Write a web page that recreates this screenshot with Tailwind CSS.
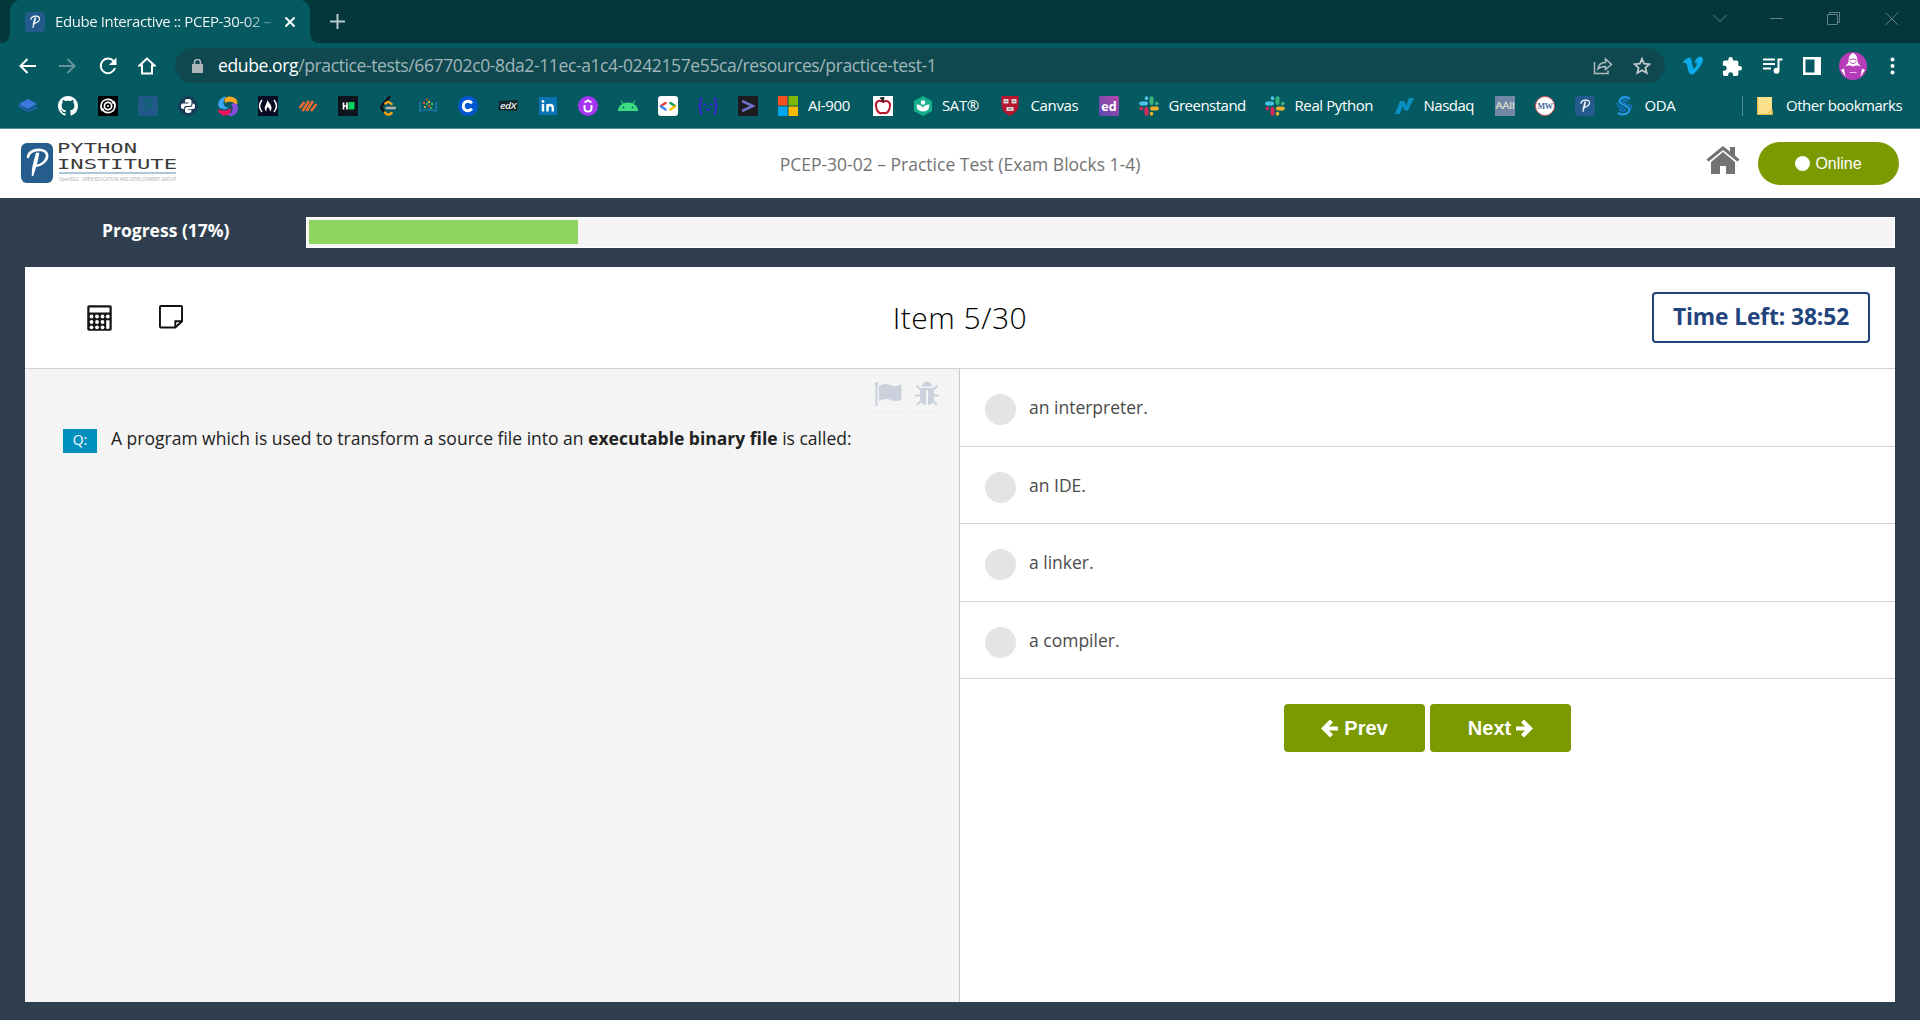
<!DOCTYPE html>
<html lang="en">
<head>
<meta charset="utf-8">
<title>Edube Interactive :: PCEP-30-02</title>
<script src="https://cdn.jsdelivr.net/npm/@tailwindcss/browser@4"></script>
</head>
<body class="w-[1920px] h-[1020px] overflow-hidden flex flex-col bg-[#2f3f4f] font-['Open_Sans',sans-serif]">
<svg class="hidden">
  <symbol id="plogo" viewBox="0 0 32 40">
    <path d="M7 14C8 8 15 6.500 20 7C27 8 27.500 14 24 18C21.500 21 17 23 13 23" fill="none" stroke="#fff" stroke-width="2.600" stroke-linecap="round"/>
    <path d="M17.500 10.500C16.500 18 14 26 11.500 33C11 27 13.500 17 15.500 10.500Z" fill="#fff" stroke="#fff" stroke-width="1.400"/>
  </symbol>
  <symbol id="slack" viewBox="0 0 20 20">
    <g fill="none" stroke-width="4" stroke-linecap="round">
      <path d="M2.200 7.500H7" stroke="#4dc3ea"/><path d="M7.500 2.100V2.500" stroke="#4dc3ea" stroke-width="3.500"/>
      <path d="M12.500 2.200V7" stroke="#34b37e"/><path d="M17.600 7.500H17.900" stroke="#34b37e" stroke-width="3.500"/>
      <path d="M13 12.500H17.800" stroke="#ecb22e"/><path d="M12.500 17.600V17.900" stroke="#ecb22e" stroke-width="3.500"/>
      <path d="M7.500 13V17.800" stroke="#d9275c"/><path d="M2.100 12.500H2.400" stroke="#d9275c" stroke-width="3.500"/>
    </g>
  </symbol>
</svg>

<!-- Tab strip -->
<div class="h-[43px] shrink-0 bg-[#03373c] flex">
  <svg class="w-[10px] h-[43px] shrink-0" viewBox="0 0 10 43"><path d="M0 43Q10 43 10 33V43Z" fill="#045a60"/></svg>
  <div class="w-[300px] h-full bg-[#045a60] rounded-t-[10px] flex items-center pl-[15px] pr-[14px]">
    <svg class="w-5 h-5 shrink-0" viewBox="0 0 20 20"><rect width="20" height="20" rx="4" fill="#255b8c"/><use href="#plogo" x="2" y="1" width="16" height="18"/></svg>
    <div class="ml-[10px] w-[220px] whitespace-nowrap text-[15px] tracking-[-0.4px] leading-5 pb-[2px] bg-linear-to-r from-white from-85% to-white/20 bg-clip-text text-transparent">Edube Interactive :: PCEP-30-02 –</div>
    <svg class="ml-[9px] w-3 h-3" viewBox="0 0 12 12"><path d="M1.500 1.500L10.500 10.500M10.500 1.500L1.500 10.500" stroke="#fff" stroke-width="2"/></svg>
  </div>
  <svg class="w-[10px] h-[43px] shrink-0" viewBox="0 0 10 43"><path d="M10 43Q0 43 0 33V43Z" fill="#045a60"/></svg>
  <svg class="ml-[10px] mt-[14px] w-4 h-4" viewBox="0 0 16 16"><path d="M7.500 0V15M0 7.500H15" stroke="#b9c9cb" stroke-width="2"/></svg>
  <div class="ml-auto flex items-start">
    <svg class="mt-[14px] w-[14px] h-[9px] mr-[43px]" viewBox="0 0 14 9"><path d="M.5 1L7 7.500L13.500 1" fill="none" stroke="#628286"/></svg>
    <svg class="mt-[18px] w-[14px] h-[2px] mr-[43px]" viewBox="0 0 14 2"><path d="M0 .5H13" stroke="#628286"/></svg>
    <svg class="mt-3 w-[14px] h-[14px] mr-[44px]" viewBox="0 0 14 14"><path d="M.5 2.500H10.500V12.500H.5ZM2.500 2.500V.5H12.500V10.500H10.500" fill="none" stroke="#628286"/></svg>
    <svg class="mt-3 w-[14px] h-[14px] mr-[21px]" viewBox="0 0 14 14"><path d="M.5 .5L13 13M13 .5L.5 13" stroke="#628286"/></svg>
  </div>
</div>

<!-- Toolbar -->
<div class="h-[45px] shrink-0 bg-[#045a60] flex items-center pl-[19px] pr-[18px]">
  <svg class="w-[17px] h-4" viewBox="0 0 17 16"><path d="M17 8H1.500M8.500 1L1.500 8L8.500 15" fill="none" stroke="#fff" stroke-width="2"/></svg>
  <svg class="ml-[23px] w-[17px] h-4" viewBox="0 0 17 16"><path d="M0 8H15.500M8.500 1L15.500 8L8.500 15" fill="none" stroke="#649497" stroke-width="2"/></svg>
  <svg class="ml-[23px] w-[18px] h-[18px]" viewBox="0 0 18 18"><path d="M14.500 4A7.300 7.300 0 1 0 16 11" fill="none" stroke="#fff" stroke-width="2"/><path d="M17.500 .5V8H10Z" fill="#fff"/></svg>
  <svg class="ml-[21px] w-[18px] h-[18px]" viewBox="0 0 18 18"><path d="M9 1.500L1.500 8.500H4V16.500H14V8.500H16.500Z" fill="none" stroke="#fff" stroke-width="2"/></svg>
  <div class="ml-[19px] w-[1490px] h-[35px] rounded-full bg-[#10484f] flex items-center pl-[17px] pr-[14px]">
    <svg class="w-[11px] h-[14px] shrink-0" viewBox="0 0 11 14"><path d="M0 5H11V14H0Z" fill="#adb5b8"/><path d="M2.500 6V3.500A3 3 0 0 1 8.500 3.500V6" fill="none" stroke="#adb5b8" stroke-width="1.600"/></svg>
    <div class="ml-[15px] pb-[2px] text-[17.500px] leading-6 whitespace-nowrap text-[#9fb6b9] tracking-[-0.38px]"><span class="text-white">edube.org</span>/practice-tests/667702c0-8da2-11ec-a1c4-0242157e55ca/resources/practice-test-1</div>
    <svg class="ml-auto w-5 h-[18px]" viewBox="0 0 20 18"><path d="M1.500 5V16.500H15V13.500M5 12C5.500 7.500 8.500 5.500 12.500 5.500V2L18.500 7.500L12.500 12.500V9.500C9.500 9.500 7 10 5 12Z" fill="none" stroke="#aebdbf" stroke-width="1.500"/></svg>
    <svg class="ml-5 w-[18px] h-[18px]" viewBox="0 0 18 18"><path d="M9 1.800L11.100 6.700L16.500 7.200L12.400 10.700L13.700 16L9 13.200L4.300 16L5.600 10.700L1.500 7.200L6.900 6.700Z" fill="none" stroke="#c1c9cb" stroke-width="1.800"/></svg>
  </div>
  <svg class="ml-[17px] w-[22px] h-[19px]" viewBox="0 0 22 19"><path d="M1 5.500C3 4 5 1.500 7 1.500C9.500 1.300 9.500 5 10.200 8C10.800 11 11.200 12.500 12 12.500C12.800 12.500 14.500 10 14.800 8.500C15.200 6.500 13.700 6.500 12.500 7C13.500 3 16 .5 18.500 .8C21 1 21.300 3.500 20.500 6C19 10.500 12.500 18.500 9.500 18.500C6.500 18.500 6 13 5 9C4.300 6.500 4 6.300 2 7.300Z" fill="#0cabea"/></svg>
  <svg class="ml-[18px] w-[20px] h-[20px]" viewBox="1 0 22 22"><path d="M20.500 11H19V7A2 2 0 0 0 17 5H13V3.500A2.500 2.500 0 0 0 8 3.500V5H4A2 2 0 0 0 2 7V10.800H3.500A2.700 2.700 0 0 1 3.500 16.200H2V20A2 2 0 0 0 4 22H7.800V20.500A2.700 2.700 0 0 1 13.200 20.500V22H17A2 2 0 0 0 19 20V16H20.500A2.500 2.500 0 0 0 20.500 11Z" fill="#fff"/></svg>
  <svg class="ml-[21px] w-5 h-4" viewBox="0 0 20 16"><path d="M0 1.500H12M0 6H12M0 10.500H8M15.500 12V1.500H19.500" fill="none" stroke="#fff" stroke-width="2"/><circle cx="13.500" cy="12.700" r="3" fill="#fff"/></svg>
  <svg class="ml-[20px] w-[18px] h-[18px]" viewBox="0 0 18 18"><path d="M0 0H18V18H0ZM2.500 2.500V15.500H11.500V2.500Z" fill="#fff" fill-rule="evenodd"/></svg>
  <svg class="ml-[18px] w-7 h-7" viewBox="0 0 28 28"><circle cx="14" cy="14" r="14" fill="#b63cb9"/><path d="M14 1C11 2 9.500 5 9.500 9C9.500 11 8 12.500 6 14.500C10 13 12 13.500 14 14.500C16 13.500 18 13 22 14.500C20 12.500 18.500 11 18.500 9C18.500 5 17 2 14 1Z" fill="#fff"/><path d="M10.500 8Q14 5.500 17.500 8M11 9.500Q14 14 17 9.500" stroke="#b63cb9" fill="none"/><path d="M2 18L5 16.500L6.500 25ZM26 18L23 16.500L21.500 25Z" fill="#fff"/><path d="M10.500 20.500H17.500" stroke="#e9bfea"/></svg>
  <svg class="ml-[23px] w-[5px] h-[18px]" viewBox="0 0 5 18"><circle cx="2.500" cy="2.500" r="2" fill="#fff"/><circle cx="2.500" cy="9" r="2" fill="#fff"/><circle cx="2.500" cy="15.500" r="2" fill="#fff"/></svg>
</div>

<!-- Bookmarks -->
<div class="h-[41px] shrink-0 bg-[#045a60] border-b border-[#4f8d91] pl-[18px] pb-[4px] flex items-center gap-5 text-white text-[15px] tracking-[-0.4px] leading-[18px] whitespace-nowrap [&>svg]:w-5 [&>svg]:h-5 [&>svg]:shrink-0">
  <svg viewBox="0 0 20 20"><path d="M1 8L10 3L19 8L10 13Z" fill="#3c78dd"/><path d="M1 8V11L10 16L19 12V10L10 14.500Z" fill="#2a60c0"/></svg>
  <svg viewBox="0 0 16 16"><path fill="#fff" d="M8 0C3.580 0 0 3.580 0 8c0 3.540 2.290 6.530 5.470 7.590.4.070.55-.17.55-.38 0-.19-.01-.82-.01-1.490-2.010.37-2.530-.49-2.690-.94-.09-.23-.48-.94-.82-1.130-.28-.15-.68-.52-.01-.53.63-.01 1.080.58 1.230.82.72 1.210 1.870.87 2.330.66.070-.52.28-.87.51-1.070-1.780-.2-3.640-.89-3.640-3.950 0-.87.31-1.590.82-2.150-.08-.2-.36-1.020.08-2.120 0 0 .67-.21 2.200.82.64-.18 1.320-.27 2-.27s1.360.09 2 .27c1.530-1.040 2.200-.82 2.200-.82.44 1.100.16 1.920.08 2.120.51.56.82 1.270.82 2.150 0 3.070-1.870 3.750-3.650 3.950.29.25.54.73.54 1.480 0 1.070-.01 1.930-.01 2.200 0 .21.15.46.55.38A8.010 8.010 0 0 0 16 8c0-4.420-3.580-8-8-8z"/></svg>
  <svg viewBox="0 0 20 20"><rect width="20" height="20" fill="#000"/><path d="M4.500 15C1.500 11 3 4.500 8.500 3.500C13 3 15 5 15.500 8M15.500 5C18.500 9 17 15.500 11.500 16.500C7 17 5 15 4.500 12" fill="none" stroke="#fff" stroke-width="1.600"/><circle cx="10" cy="10" r="3.600" fill="none" stroke="#fff" stroke-width="1.700"/><circle cx="10" cy="10" r="1" fill="#fff"/></svg>
  <svg viewBox="0 0 20 20"><rect width="20" height="20" rx="3" fill="#23598a"/><path d="M6 7C7 4 11 3 13.500 5C15.500 8 12 11 9 11M10 5.500L7 16" fill="none" stroke="#0c646e" stroke-width="1.800"/></svg>
  <svg viewBox="0 0 20 20"><circle cx="10" cy="10" r="9.700" fill="#193c56"/><path d="M9.500 3C7 3 7 4 7 6.500H10.500V7.500H5C3 7.500 3 9 3 10.500C3 12 3.500 13 5 13H6C6 10.500 7 10 9 10H11.500C13 10 13.500 9 13.500 7.500V5C13.500 3.500 12 3 9.500 3Z" fill="#fff"/><path d="M10.500 17C13 17 13.500 16 13.500 13.800H10V13H15C17 13 17 11.500 17 10C17 8.500 16.500 7.500 14.500 7.500C14.500 9.500 14 11 12 11H9C7.500 11 7 12 7 13V15C7 16.500 8.500 17 10.500 17Z" fill="#fff"/></svg>
  <svg viewBox="0 0 20 20"><path d="M8 .5C2 1 -2 8 1.500 11.500C4 14 8.500 13.500 11 11.500C5.500 11.500 3.500 6.500 8 .5Z" fill="#3aa5f5"/><path d="M6.500 3C8 -.5 14.500 -.5 18 3C20 6 19.500 8 18 10C17 6 12 4.500 7 7Z" fill="#fba81c"/><path d="M18.500 8C21.500 12 20 19 13 20C11 20 10.500 19.500 10 18.500C15 17 16 12 13 8C15 7 17 7 18.500 8Z" fill="#8a4bdc"/><path d="M0 13C4 15.500 9 15 13 12C13.500 16 10.500 20 6.500 19.500C2.500 19 0 16 0 13Z" fill="#f5115e"/></svg>
  <svg viewBox="0 0 20 20"><rect width="20" height="20" fill="#0a0a23"/><path d="M4 4Q-1 10 4 16M16 4Q21 10 16 16" fill="none" stroke="#fff" stroke-width="1.500"/><path d="M9.500 4C10.500 7 14 9 13.500 12.500C13.300 14.500 12 15.500 12 15.500C12 12.500 10.500 12 10 11C8.500 12 8 13.500 8.500 15.500C4.500 12.500 8.500 9 9.500 4Z" fill="#fff"/></svg>
  <svg viewBox="0 0 20 20"><path d="M1.500 12L6.500 6M4.500 15L11 5M8.500 15L15 5M13 15L18.500 8" stroke="#f0692e" stroke-width="2.500"/></svg>
  <svg viewBox="0 0 20 20"><rect width="20" height="20" fill="#0e141e"/><path d="M5.500 6.500V13.500M9 6.500V13.500M5.500 10H9" stroke="#fff" stroke-width="1.700"/><rect x="10.500" y="6" width="6" height="7.500" fill="#05d65a"/></svg>
  <svg viewBox="0 0 20 20"><path d="M11.500 1L4 9.500Q2.500 11.500 4.500 13.500L7 16.500" fill="none" stroke="#111" stroke-width="2.500" stroke-linecap="round"/><path d="M7 16.500Q10 20.500 13.500 17M7.500 7.500Q10.500 4.500 13.500 8" fill="none" stroke="#f5a31a" stroke-width="2.500" stroke-linecap="round"/><path d="M8.500 12H17" stroke="#b3b3b3" stroke-width="2.300" stroke-linecap="round"/></svg>
  <svg viewBox="0 0 20 20"><path d="M2 6V15Q10 12.500 18 15V6" fill="none" stroke="#176f9a" stroke-width="2"/><g fill="#e94f37"><circle cx="6" cy="7" r="1.200"/><circle cx="11" cy="10" r="1.200"/><circle cx="9" cy="3.500" r="1"/></g><g fill="#e5b93a"><circle cx="11" cy="6" r="1.200"/><circle cx="7" cy="11" r="1.100"/></g><g fill="#57bd57"><circle cx="14" cy="8" r="1.200"/><circle cx="9" cy="8" r="1.100"/><circle cx="13" cy="12" r="1.100"/></g></svg>
  <svg viewBox="0 0 20 20"><circle cx="10" cy="10" r="10" fill="#0056d2"/><path d="M13.800 7.300A4.700 4.700 0 1 0 13.800 12.700" fill="none" stroke="#fff" stroke-width="3"/></svg>
  <svg viewBox="0 0 20 20"><path d="M1 5L20 4L19 15L0 14Z" fill="#14292c"/><text x="10" y="13" text-anchor="middle" textLength="16" lengthAdjust="spacingAndGlyphs" font-size="9.500" font-style="italic" font-weight="600" fill="#eee">edX</text></svg>
  <svg viewBox="0 0 20 20"><rect x="1" y="1" width="18" height="18" fill="#0a73b4"/><circle cx="5" cy="5.500" r="1.400" fill="#fff"/><path d="M5 8V15.500M9.500 8V15.500M9.500 12C9.500 8 14.800 8 14.800 12V15.500" fill="none" stroke="#fff" stroke-width="2.400"/></svg>
  <svg viewBox="0 0 20 20"><circle cx="10" cy="10" r="10" fill="#a435f0"/><path d="M6.500 9V12Q6.500 15.500 10 15.500T13.500 12V9M6.500 6.500L10 4.500L13.500 6.500" fill="none" stroke="#fff" stroke-width="2"/></svg>
  <svg viewBox="0 0 20 20"><path d="M0 15C.5 3.500 19.500 3.500 20 15Z" fill="#3ddc84"/><path d="M5 8L3 4.500M15 8L17 4.500" stroke="#3ddc84"/><circle cx="5.500" cy="11.500" r=".9" fill="#045a60"/><circle cx="14.500" cy="11.500" r=".9" fill="#045a60"/></svg>
  <svg viewBox="0 0 20 20"><rect width="20" height="20" rx="3" fill="#fff"/><g fill="none" stroke-width="2.600" stroke-linecap="round"><path d="M3 10L7.500 7" stroke="#ea4335"/><path d="M3 10.500L7.500 13.500" stroke="#4285f4"/><path d="M12.500 7L17 10" stroke="#0f9d58"/><path d="M17 10.500L12.500 13.500" stroke="#fbbc04"/></g></svg>
  <svg viewBox="0 0 20 20"><path d="M4.500 2Q2 2 2.500 5V8L1 10L2.500 12V15Q2 18 4.500 18M15.500 2Q18 2 17.500 5V8L19 10L17.500 12V15Q18 18 15.500 18M5.500 9Q7 7.500 8 9M12 9Q13.500 7.500 14.500 9M8 13Q10 15 12 13" fill="none" stroke="#3f1be0" stroke-width="1.700"/></svg>
  <svg viewBox="0 0 20 20"><rect width="20" height="20" fill="#1c1c20"/><path d="M4 5L15 10L4 15" fill="none" stroke="#6e70c6" stroke-width="2.500"/></svg>
  <div class="flex gap-[10px]"><svg class="w-5 h-5" viewBox="0 0 20 20"><path d="M0 0H9.500V9.500H0Z" fill="#f25022"/><path d="M10.500 0H20V9.500H10.500Z" fill="#7fba00"/><path d="M0 10.500H9.500V20H0Z" fill="#00a4ef"/><path d="M10.500 10.500H20V20H10.500Z" fill="#ffb900"/></svg><span class="w-[45px]">AI-900</span></div>
  <svg viewBox="0 0 20 20"><rect width="20" height="20" fill="#fff"/><path d="M10 6C5.500 3 2.500 6 3 10C3.500 15 6 18 9 17H11C14 18 16.500 15 17 10C17.500 6 14 3.500 10 6Z" fill="#fff" stroke="#b5142b" stroke-width="2"/><path d="M10 6Q9.500 3 7 2L11 1.500Z" fill="#222" stroke="#222"/></svg>
  <div class="flex gap-[10px]"><svg class="w-5 h-5" viewBox="0 0 20 20"><path d="M10 0L19 5V15L10 20L1 15V5Z" fill="#14b08c"/><circle cx="10" cy="6.500" r="2.300" fill="#fff"/><path d="M3.500 8.500Q9 8.500 10 12Q11 8.500 16.500 8.500Q16.500 15.500 10 15.500T3.500 8.500Z" fill="#fff"/></svg><span class="w-[37.500px] -ml-px">SAT®</span></div>
  <div class="flex gap-[10px]"><svg class="w-5 h-5" viewBox="0 0 20 20"><path d="M1.500 0H18.500V10Q18 16 10 20Q2 16 1.500 10Z" fill="#b71530"/><path d="M3.500 3H8.500V7.500H3.500ZM11.500 3H16.500V7.500H11.500ZM6.500 11H13.500V15H6.500Z" fill="#e4d6d8"/><path d="M4.500 5.200H7.500M12.500 5.200H15.500M8 13H12" stroke="#777"/></svg><span class="w-[48px] ml-px tracking-[-0.35px]">Canvas</span></div>
  <svg viewBox="0 0 20 20"><defs><linearGradient id="edg" x1="0" y1="1" x2="1" y2="0"><stop stop-color="#5c4bb5"/><stop offset="1" stop-color="#b545a8"/></linearGradient></defs><rect width="20" height="20" rx="2" fill="url(#edg)"/><text x="10" y="14.500" text-anchor="middle" font-size="12.500" font-weight="700" fill="#fff" letter-spacing="0">ed</text></svg>
  <div class="flex gap-[10px]"><svg class="w-5 h-5"><use href="#slack"/></svg><span class="w-[76px] tracking-[-0.5px]">Greenstand</span></div>
  <div class="flex gap-[10px]"><svg class="w-5 h-5"><use href="#slack"/></svg><span class="w-[79px]">Real Python</span></div>
  <div class="flex gap-[10px]"><svg class="w-5 h-5" viewBox="0 0 20 20"><path d="M1 18L6 5H10L6 18ZM6.500 5H10L14 14.500H10.500ZM15 2H20L14 14.500H10.500Z" fill="#0a8fc2"/></svg><span class="w-[51px] tracking-[-0.5px]">Nasdaq</span></div>
  <svg viewBox="0 0 20 20"><rect width="20" height="20" fill="#7187a6"/><text x="10" y="12.500" text-anchor="middle" textLength="19" lengthAdjust="spacingAndGlyphs" font-size="9.500" fill="#f0eed8">AAII</text></svg>
  <svg viewBox="0 0 20 20"><circle cx="10" cy="10" r="9.500" fill="#fff" stroke="#d9535c"/><text x="10" y="13" text-anchor="middle" textLength="15" lengthAdjust="spacingAndGlyphs" font-size="8.500" font-weight="700" font-family="Liberation Serif" fill="#41689b">MW</text></svg>
  <svg viewBox="0 0 20 20"><rect width="20" height="20" rx="4" fill="#255b8c"/><use href="#plogo" x="2" y="1" width="16" height="18"/></svg>
  <div class="flex gap-[10px]"><svg class="w-5 h-5" viewBox="0 0 20 20"><path d="M15 3Q10 -1 5.500 3Q2.500 7 10 9.500Q17 12 13 16.500Q9 20 3 17" fill="none" stroke="#2196e3" stroke-width="2.200"/><path d="M13 6Q10 3 8 5Q8 7 12 8.500M2 7Q3 11 8 12Q11 13 10 14.500Q7 16 4 13M13 8Q17 9 16.500 13" fill="none" stroke="#1472bd" stroke-width="1.800"/></svg><span>ODA</span></div>
  <div class="ml-auto mr-[17px] flex items-center"><div class="w-px h-5 bg-[#4f8d91] mr-[14px]"></div><svg class="w-4 h-[18px] mr-[13px]" viewBox="0 0 16 18"><path d="M0 0H15V12L16 17.500H0Z" fill="#ffe08a"/><path d="M.5 .5V17.500H15V12.500L12 16V17" fill="none" stroke="#e3b63f"/></svg><span class="w-[117px] pb-[2px] tracking-[-0.47px]">Other bookmarks</span></div>
</div>

<!-- Site header -->
<header class="h-[69px] shrink-0 bg-white grid grid-cols-3 items-start">
  <div class="flex pl-[21px] pt-[13px]">
    <svg class="w-8 h-10 mt-[1px]" viewBox="0 0 32 40"><rect width="32" height="40" rx="6" fill="#255e8e"/><use href="#plogo" width="32" height="40"/></svg>
    <svg class="ml-[5px] w-[120px] h-[42px] overflow-visible" viewBox="0 0 120 42" font-family="DejaVu Sans Mono">
      <g font-size="14" fill="#3b3b3b"><text x="-1" y="11" textLength="80" lengthAdjust="spacingAndGlyphs">PYTHON</text><text x="-1" y="26.500" textLength="120" lengthAdjust="spacingAndGlyphs">INSTITUTE</text></g>
      <path d="M1 31H118" stroke="#afc6d8" stroke-width="2"/>
      <text x="1" y="39" font-size="4.800" font-family="Open Sans" fill="#aaa" textLength="117" lengthAdjust="spacingAndGlyphs">OpenEDG · OPEN EDUCATION AND DEVELOPMENT GROUP</text>
    </svg>
  </div>
  <div class="pt-[23px] text-center text-[17.500px] leading-6 text-[#737373] whitespace-nowrap">PCEP-30-02 – Practice Test (Exam Blocks 1-4)</div>
  <div class="flex justify-end pr-[21px] pt-[13px]">
    <svg class="w-[34px] h-[28px] mt-[4px] mr-[18px]" viewBox="0 0 34 28"><path d="M1.500 14.500L17 2L32.500 14.500" fill="none" stroke="#737373" stroke-width="3"/><path d="M24 1H29V11L24 7Z" fill="#737373"/><path d="M17 6L29 16V28H20V20H14V28H5V16Z" fill="#737373"/></svg>
    <button class="w-[141px] h-[43px] rounded-full bg-[#7b9a00] flex items-center justify-center gap-[5px] text-white text-[16px] font-['Liberation_Sans',sans-serif]"><span class="w-[15px] h-[15px] rounded-full bg-white"></span>Online</button>
  </div>
</header>

<!-- Progress -->
<div class="h-[69px] shrink-0 flex pt-[19px] pl-[25px] pr-[25px]">
  <div class="w-[281px] pl-[77px] text-white font-bold text-[17.500px] leading-[27px]">Progress (17%)</div>
  <div class="flex-1 h-[31px] bg-[#f5f5f5] border border-white p-[2px]"><div class="h-[24px] bg-[#8ed45f] w-[269px]"></div></div>
</div>

<!-- Test card -->
<main class="mx-[25px] h-[735px] shrink-0 bg-white flex flex-col">
  <div class="h-[102px] shrink-0 border-b border-[#d3d3d3] grid grid-cols-3 items-center px-[25px]">
    <div class="flex gap-[47px] pl-[37px]">
      <svg class="w-[25px] h-[26px]" viewBox="0 0 25 26"><rect x="1" y="1" width="23" height="24" rx="1" fill="#151515" stroke="#151515" stroke-width="1.500"/><path d="M2.500 2.500H22.500V7.500H2.500Z" fill="#fff"/><g fill="#fff"><circle cx="4.500" cy="11.500" r="1.900"/><circle cx="10" cy="11.500" r="1.900"/><circle cx="15.500" cy="11.500" r="1.900"/><circle cx="20.800" cy="11.500" r="1.900"/><circle cx="4.500" cy="17" r="1.900"/><circle cx="10" cy="17" r="1.900"/><circle cx="15.500" cy="17" r="1.900"/><path d="M19.200 15.300H22.500V23.800H19.200Z"/><circle cx="4.500" cy="22.300" r="1.900"/><circle cx="10" cy="22.300" r="1.900"/><circle cx="15.500" cy="22.300" r="1.900"/></g></svg>
      <svg class="w-[24px] h-[24px]" viewBox="0 0 25 25"><path d="M1 2Q1 1 2 1H23Q24 1 24 2V17L17 23.500H2Q1 23.500 1 22.500ZM17 23.500V17H24" fill="none" stroke="#111" stroke-width="2"/></svg>
    </div>
    <div class="text-center text-[30px] leading-10 text-black font-light tracking-[0.5px]">Item 5/30</div>
    <div class="flex justify-end"><div class="w-[218px] h-[51px] border-2 border-[#22447c] rounded-[4px] text-center text-[22.750px] leading-[45px] font-bold tracking-[-0.1px] text-[#22447c]">Time Left: 38:52</div></div>
  </div>
  <div class="flex-1 flex">
    <section class="w-[935px] bg-[#f4f4f4] border-r border-[#c9c9c9]">
      <div class="flex justify-end pt-3 pr-[19px] gap-[6px] h-[44px]">
        <div class="w-[34px] border-b border-dotted border-[#e6e6e6]"><svg class="w-[29px] h-[26px]" viewBox="0 0 29 26"><circle cx="2.500" cy="3" r="2" fill="#cad1dc"/><path d="M2.500 3V25" stroke="#cad1dc" stroke-width="2"/><path d="M5 5Q11 1.500 16 4T27.500 3.500V18.500Q22 21.500 17 19T5 20Z" fill="#cad1dc"/></svg></div>
        <div class="w-[26px] border-b border-dotted border-[#e6e6e6]"><svg class="w-[26px] h-[26px]" viewBox="0 0 26 26"><path d="M8 5.500A5 5 0 0 1 18 5.500ZM6 7H20V17Q20 23 14 24V9H12V24Q6 23 6 17Z" fill="#cad1dc"/><path d="M2.500 4.500L6.500 8.500M23.500 4.500L19.500 8.500M1 14.500H6M20 14.500H25M3 24L7 20M23 24L19 20" stroke="#cad1dc" stroke-width="2"/></svg></div>
      </div>
      <div class="flex pl-[38px] pt-[12px]">
        <span class="w-[34px] h-6 mt-[4px] bg-[#008fbf] text-white text-center text-[14px] leading-[22px]">Q:</span>
        <p class="ml-[14px] text-[17.500px] leading-[26px] text-[#222]">A program which is used to transform a source file into an <b>executable binary file</b> is called:</p>
      </div>
    </section>
    <section class="flex-1 text-[17.500px] text-[#4a4a4a]">
      <div class="h-[78px] border-b border-[#d3d3d3] flex pl-[25px] pt-[25px]"><span class="w-[31px] h-[31px] rounded-full bg-[#e4e4e4]"></span><span class="ml-[13px] leading-[27px]">an interpreter.</span></div>
      <div class="h-[77px] border-b border-[#d3d3d3] flex pl-[25px] pt-[25px]"><span class="w-[31px] h-[31px] rounded-full bg-[#e4e4e4]"></span><span class="ml-[13px] leading-[27px]">an IDE.</span></div>
      <div class="h-[78px] border-b border-[#d3d3d3] flex pl-[25px] pt-[25px]"><span class="w-[31px] h-[31px] rounded-full bg-[#e4e4e4]"></span><span class="ml-[13px] leading-[27px]">a linker.</span></div>
      <div class="h-[77px] border-b border-[#d3d3d3] flex pl-[25px] pt-[25px]"><span class="w-[31px] h-[31px] rounded-full bg-[#e4e4e4]"></span><span class="ml-[13px] leading-[27px]">a compiler.</span></div>
      <div class="flex justify-center gap-[5px] pt-[25px] text-white font-bold text-[20px] font-['Liberation_Sans',sans-serif]">
        <button class="w-[141px] h-12 rounded-[4px] bg-[#7b9a00] flex items-center justify-center gap-[5px]"><svg class="w-[18px] h-[19px]" viewBox="0 0 18 19"><path d="M17 9.500H4M10.500 2L3 9.500L10.500 17" fill="none" stroke="#fff" stroke-width="4.200"/></svg>Prev</button>
        <button class="w-[141px] h-12 rounded-[4px] bg-[#7b9a00] flex items-center justify-center gap-[4px]">Next<svg class="w-[18px] h-[19px]" viewBox="0 0 18 19"><path d="M1 9.500H14M7.500 2L15 9.500L7.500 17" fill="none" stroke="#fff" stroke-width="4.200"/></svg></button>
      </div>
    </section>
  </div>
</main>
</body>
</html>
